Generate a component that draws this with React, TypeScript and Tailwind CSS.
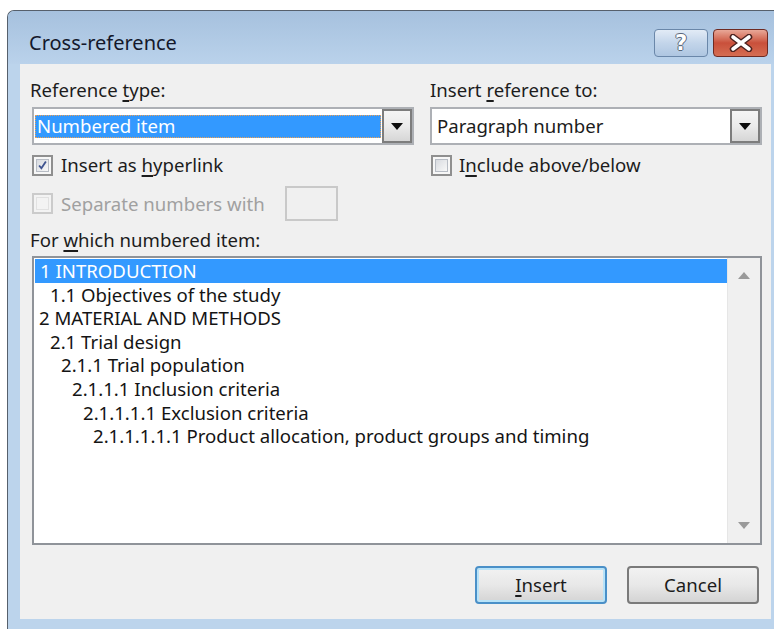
import React from "react";

const Mn = ({ children }: { children: React.ReactNode }) => (
  <span className="underline decoration-[1.5px] underline-offset-[3px]">{children}</span>
);

function DropArrow() {
  return (
    <svg width="12" height="7" viewBox="0 0 12 7" className="block">
      <path d="M0 0 H12 L6 7 Z" fill="#0d0d0d" />
    </svg>
  );
}

function ComboButton() {
  return (
    <div className="flex w-[30px] shrink-0 items-center justify-center border-2 border-[#7d7d7d] bg-gradient-to-b from-[#f5f5f5] via-[#ebebeb] to-[#d6d6d6]">
      <DropArrow />
    </div>
  );
}

function CheckBox({ checked, disabled }: { checked?: boolean; disabled?: boolean }) {
  return (
    <div
      className={
        disabled
          ? "flex h-[21px] w-[21px] shrink-0 items-center justify-center border-2 border-[#cbcbcb] bg-[#f3f3f3]"
          : "flex h-[21px] w-[21px] shrink-0 items-center justify-center border-2 border-[#8f8f8f] bg-[#f7f7f7]"
      }
    >
      <div
        className={
          disabled
            ? "flex h-[13px] w-[13px] items-center justify-center border border-[#e1e1e1] bg-[#f3f3f3]"
            : "flex h-[13px] w-[13px] items-center justify-center border border-[#b7bcc4] bg-gradient-to-br from-[#d8dbe0] to-[#f8f8f8]"
        }
      >
        {checked && (
          <svg width="13" height="13" viewBox="0 0 13 13" className="block">
            <path d="M2.5 6.5 L5.2 9.8 L10.5 1.8" fill="none" stroke="#3f5490" strokeWidth="2.2" />
          </svg>
        )}
      </div>
    </div>
  );
}

function ScrollArrow({ up }: { up?: boolean }) {
  return (
    <svg width="12" height="7" viewBox="0 0 12 7" className="block">
      <path d={up ? "M0 7 H12 L6 0 Z" : "M0 0 H12 L6 7 Z"} fill="#9a9a9a" />
    </svg>
  );
}

const items: { text: string; indent: string; selected?: boolean }[] = [
  { text: "1 INTRODUCTION", indent: "pl-[5px]", selected: true },
  { text: "1.1 Objectives of the study", indent: "pl-[15px]" },
  { text: "2 MATERIAL AND METHODS", indent: "pl-[4px]" },
  { text: "2.1 Trial design", indent: "pl-[15px]" },
  { text: "2.1.1 Trial population", indent: "pl-[26px]" },
  { text: "2.1.1.1 Inclusion criteria", indent: "pl-[37px]" },
  { text: "2.1.1.1.1 Exclusion criteria", indent: "pl-[48px]" },
  { text: "2.1.1.1.1.1 Product allocation, product groups and timing", indent: "pl-[58px]" },
];

export default function App() {
  return (
    <div className="h-[629px] w-[774px] overflow-hidden bg-white pl-[7px] pt-[10px] font-['Noto_Sans',sans-serif] text-[18.6px] leading-[24px] text-[#1c1c1c]">
      <div className="flex h-[619px] w-[767px] flex-col overflow-hidden rounded-tl-[7px] border-l border-t border-[#56606c] bg-[#bcd4ec]">
        {/* title bar */}
        <div className="flex h-[53px] shrink-0 items-center bg-gradient-to-b from-[#a6c1de] to-[#bad2eb] pl-[21px] pr-[6px] pt-[11px]">
          <div className="flex-1 text-[20px] text-[#14182b]">Cross-reference</div>
          <div className="flex gap-[5px]">
            <div className="relative flex h-[28px] w-[54px] items-center justify-center overflow-hidden rounded-[4px] border border-[#6a87a9] bg-gradient-to-b from-[#e2ebf6] via-[#c3d5ea] to-[#aec6e1]">
              <span className="font-['DejaVu_Sans',sans-serif] text-[21px] font-bold leading-none text-white [text-shadow:-1px_0_#59677a,1px_0_#59677a,0_-1px_#59677a,0_1px_#59677a]">
                ?
              </span>
            </div>
            <div className="flex h-[28px] w-[55px] items-center justify-center overflow-hidden rounded-[4px] border border-[#6e2a22] bg-gradient-to-b from-[#e8a898] via-[#c9503b] to-[#d56d52]">
              <svg width="28" height="18" viewBox="0 0 28 18" className="block">
                <path d="M6 3 L22 15 M22 3 L6 15" stroke="#4b2320" strokeWidth="6.5" strokeLinecap="round" />
                <path d="M6 3 L22 15 M22 3 L6 15" stroke="#ffffff" strokeWidth="3.6" strokeLinecap="round" />
              </svg>
            </div>
          </div>
        </div>

        {/* frame + client */}
        <div className="flex flex-1 pl-[12px] pr-[3px] pb-[10px]">
          <div className="flex flex-1 flex-col bg-[#f0f0f0]">
            {/* top two columns */}
            <div className="flex gap-[16px] pl-[12px] pt-[14px]">
              <div className="flex w-[382px] flex-col">
                <div className="-ml-[2px] h-[24px]">
                  Reference <Mn>t</Mn>ype:
                </div>
                <div className="mt-[5px] flex h-[38px] border-2 border-[#adb0b5] bg-white">
                  <div className="flex flex-1 items-center pl-[1px] pr-[1px]">
                    <div className="flex h-[23px] flex-1 items-center border border-dotted border-[#f0a050] bg-[#3399ff] pl-[1px] text-white">
                      Numbered item
                    </div>
                  </div>
                  <ComboButton />
                </div>
                <div className="mt-[8px] flex h-[24px] items-center gap-[8px]">
                  <CheckBox checked />
                  <span>
                    Insert as <Mn>h</Mn>yperlink
                  </span>
                </div>
              </div>
              <div className="flex w-[332px] flex-col">
                <div className="h-[24px]">
                  Insert <Mn>r</Mn>eference to:
                </div>
                <div className="mt-[5px] flex h-[38px] border-2 border-[#adb0b5] bg-white">
                  <div className="flex flex-1 items-center pl-[5px]">Paragraph number</div>
                  <ComboButton />
                </div>
                <div className="mt-[8px] flex h-[24px] items-center gap-[7px] pl-[1px]">
                  <CheckBox />
                  <span>
                    I<Mn>n</Mn>clude above/below
                  </span>
                </div>
              </div>
            </div>

            {/* separator row */}
            <div className="mt-[9px] flex h-[35px] items-center pl-[12px]">
              <div className="flex w-[253px] items-center gap-[8px] text-[#a0a0a0]">
                <CheckBox disabled />
                <span>Separate numbers with</span>
              </div>
              <div className="h-[35px] w-[53px] border-2 border-[#c9c9c9] bg-[#f0f0f0]" />
            </div>

            <div className="mt-[7px] h-[24px] pl-[10px]">
              For <Mn>w</Mn>hich numbered item:
            </div>

            {/* list */}
            <div className="ml-[12px] mt-[4px] flex h-[289px] w-[730px] border-2 border-[#8f9399] bg-white">
              <div className="flex-1 pl-[1px] pt-[1px]">
                {items.map((it) => (
                  <div
                    key={it.text}
                    className={
                      (it.selected ? "bg-[#3399ff] text-white " : "text-[#141414] ") +
                      "h-[23.6px] whitespace-nowrap leading-[23.6px] " +
                      it.indent
                    }
                  >
                    {it.text}
                  </div>
                ))}
              </div>
              <div className="flex w-[33px] flex-col items-center justify-between border-l border-[#e6e6e6] bg-[#f0f0f0] pb-[14px] pt-[14px]">
                <ScrollArrow up />
                <ScrollArrow />
              </div>
            </div>

            {/* buttons */}
            <div className="mt-[21px] flex justify-end gap-[20px] pr-[12px]">
              <div className="flex h-[38px] w-[132px] items-center justify-center rounded-[4px] border-2 border-[#4a90c8] bg-gradient-to-b from-[#f2f2f2] via-[#e8e8e8] to-[#d4d4d4] shadow-[inset_0_0_0_2px_#b9e3f8]">
                <span>
                  <Mn>I</Mn>nsert
                </span>
              </div>
              <div className="flex h-[38px] w-[132px] items-center justify-center rounded-[4px] border-2 border-[#7a7a7a] bg-gradient-to-b from-[#f2f2f2] via-[#e8e8e8] to-[#d4d4d4]">
                Cancel
              </div>
            </div>
          </div>
        </div>
      </div>
    </div>
  );
}
